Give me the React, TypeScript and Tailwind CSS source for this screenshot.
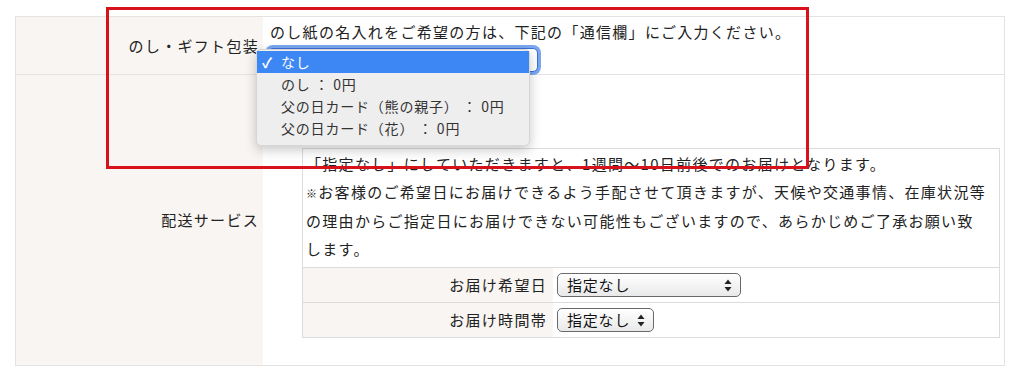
import React from 'react';

const SelectArrows = () => (
  <svg width="8" height="13" viewBox="0 0 8 13" className="shrink-0">
    <path d="M4 0.5 L7.5 5 L0.5 5 Z" fill="#222" />
    <path d="M4 12.5 L7.5 8 L0.5 8 Z" fill="#222" />
  </svg>
);

function MacSelect({ width, label }: { width: string; label: string }) {
  return (
    <div
      className={`${width} h-[24px] flex items-center justify-between pl-[9px] pr-[8px] border border-[#6a6a6a] rounded-[5px] bg-gradient-to-b from-white to-[#e9e9e9] text-[15px] tracking-[0.8px] text-[#111]`}
    >
      <span>{label}</span>
      <SelectArrows />
    </div>
  );
}

const menuItems = ['のし ： 0円', '父の日カード（熊の親子） ： 0円', '父の日カード（花） ： 0円'];

export default function App() {
  return (
    <div className="relative w-[1024px] h-[378px] overflow-hidden bg-white text-[#222] text-[15px] tracking-[1.3px] font-['Noto_Sans_CJK_JP',sans-serif]">
      <div className="ml-[15px] mt-[16px] w-[990px] border border-[#e3e3e3] grid grid-cols-[247px_1fr]">
        {/* のし・ギフト包装 */}
        <div className="h-[58px] bg-[#f8f5f3] border-b border-[#e3e3e3] flex items-center justify-end pr-[4px] pt-[2px]">
          のし・ギフト包装
        </div>
        <div className="h-[58px] border-b border-[#e3e3e3] pl-[7px] pt-[4px]">
          <p className="leading-[22px]">のし紙の名入れをご希望の方は、下記の「通信欄」にご入力ください。</p>
          <div className="mt-[5px] ml-[-2px] w-[270px] h-[24px] rounded-[5px] border border-[#3b6fd6] ring-[3px] ring-[#7aa7f0] bg-white" />
        </div>

        {/* 配送サービス */}
        <div className="h-[290px] bg-[#f8f5f3] flex items-center justify-end pr-[4px]">配送サービス</div>
        <div className="pt-[73px] pl-[39px]">
          <div className="w-[698px] border border-[#dcdcdc]">
            <div className="pl-[3px] pt-[1px] pb-[4px] leading-[28px]">
              <p>「指定なし」にしていただきますと、1週間〜10日前後でのお届けとなります。</p>
              <p>
                <span className="text-[11px]">※</span>お客様のご希望日にお届けできるよう手配させて頂きますが、天候や交通事情、在庫状況等
              </p>
              <p>の理由からご指定日にお届けできない可能性もございますので、あらかじめご了承お願い致</p>
              <p>します。</p>
            </div>
            <div className="grid grid-cols-[250px_1fr] border-t border-[#dcdcdc] h-[35px]">
              <div className="bg-[#f8f5f3] flex items-center justify-end pr-[6px]">お届け希望日</div>
              <div className="flex items-center pl-[4px]">
                <MacSelect width="w-[184px]" label="指定なし" />
              </div>
            </div>
            <div className="grid grid-cols-[250px_1fr] border-t border-[#dcdcdc] h-[35px]">
              <div className="bg-[#f8f5f3] flex items-center justify-end pr-[6px]">お届け時間帯</div>
              <div className="flex items-center pl-[4px]">
                <MacSelect width="w-[97px]" label="指定なし" />
              </div>
            </div>
          </div>
        </div>
      </div>

      {/* open select menu */}
      <div className="absolute left-[256px] top-[49px] w-[274px] h-[97px] pt-[1px] rounded-[5px] bg-[#eeeeee] border border-[#d6d6d6] shadow-[0_4px_12px_rgba(0,0,0,0.22)] text-[14px] tracking-[0.8px] text-[#333]">
        <div className="h-[22px] bg-[#3d87f5] text-white flex items-center">
          <span className="w-[24px] pl-[5px] text-[14px] font-bold">✓</span>
          <span>なし</span>
        </div>
        {menuItems.map((item) => (
          <div key={item} className="h-[22px] flex items-center pl-[24px] whitespace-pre">
            {item}
          </div>
        ))}
      </div>

      {/* highlight frame */}
      <div className="absolute left-[106px] top-[7px] w-[703px] h-[162px] border-[3px] border-[#d8121b]" />
    </div>
  );
}
